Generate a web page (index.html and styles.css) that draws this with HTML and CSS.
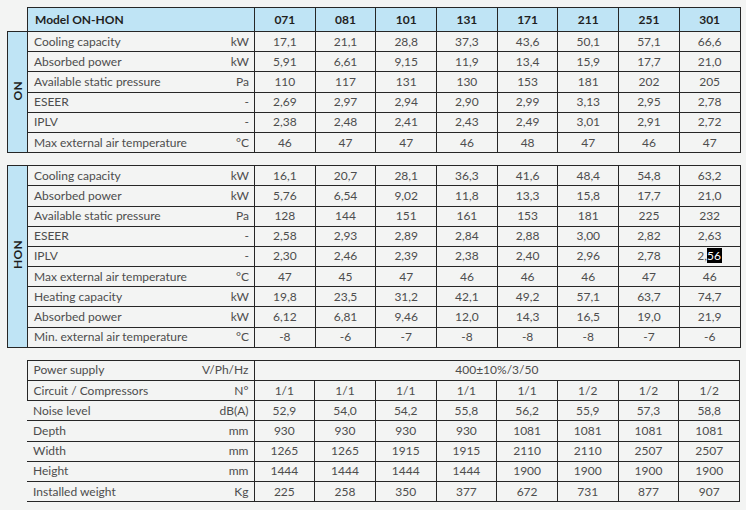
FILE: index.html
```html
<!DOCTYPE html>
<html lang="en">
<head>
<meta charset="utf-8">
<title>Model ON-HON</title>
<link rel="stylesheet" href="styles.css">
</head>
<body>
<div class="page">
  <table class="spec t1">
    <colgroup><col class="c-side"><col class="c-label"><col class="c-d"><col class="c-d"><col class="c-d"><col class="c-d"><col class="c-d"><col class="c-d"><col class="c-d"><col class="c-d"></colgroup>
    <thead>
      <tr><th class="blank"></th><th class="model">Model ON-HON</th><th>071</th><th>081</th><th>101</th><th>131</th><th>171</th><th>211</th><th>251</th><th>301</th></tr>
    </thead>
    <tbody>
      <tr><th class="side" rowspan="6"><span class="vt">ON</span></th><td class="lc"><div class="lab"><span>Cooling capacity</span><span>kW</span></div></td><td>17,1</td><td>21,1</td><td>28,8</td><td>37,3</td><td>43,6</td><td>50,1</td><td>57,1</td><td>66,6</td></tr>
      <tr><td class="lc"><div class="lab"><span>Absorbed power</span><span>kW</span></div></td><td>5,91</td><td>6,61</td><td>9,15</td><td>11,9</td><td>13,4</td><td>15,9</td><td>17,7</td><td>21,0</td></tr>
      <tr><td class="lc"><div class="lab"><span>Available static pressure</span><span>Pa</span></div></td><td>110</td><td>117</td><td>131</td><td>130</td><td>153</td><td>181</td><td>202</td><td>205</td></tr>
      <tr><td class="lc"><div class="lab"><span>ESEER</span><span>-</span></div></td><td>2,69</td><td>2,97</td><td>2,94</td><td>2,90</td><td>2,99</td><td>3,13</td><td>2,95</td><td>2,78</td></tr>
      <tr><td class="lc"><div class="lab"><span>IPLV</span><span>-</span></div></td><td>2,38</td><td>2,48</td><td>2,41</td><td>2,43</td><td>2,49</td><td>3,01</td><td>2,91</td><td>2,72</td></tr>
      <tr><td class="lc"><div class="lab"><span>Max external air temperature</span><span>°C</span></div></td><td>46</td><td>47</td><td>47</td><td>46</td><td>48</td><td>47</td><td>46</td><td>47</td></tr>
    </tbody>
  </table>

  <table class="spec t2">
    <colgroup><col class="c-side"><col class="c-label"><col class="c-d"><col class="c-d"><col class="c-d"><col class="c-d"><col class="c-d"><col class="c-d"><col class="c-d"><col class="c-d"></colgroup>
    <tbody>
      <tr><th class="side" rowspan="9"><span class="vt">HON</span></th><td class="lc"><div class="lab"><span>Cooling capacity</span><span>kW</span></div></td><td>16,1</td><td>20,7</td><td>28,1</td><td>36,3</td><td>41,6</td><td>48,4</td><td>54,8</td><td>63,2</td></tr>
      <tr><td class="lc"><div class="lab"><span>Absorbed power</span><span>kW</span></div></td><td>5,76</td><td>6,54</td><td>9,02</td><td>11,8</td><td>13,3</td><td>15,8</td><td>17,7</td><td>21,0</td></tr>
      <tr><td class="lc"><div class="lab"><span>Available static pressure</span><span>Pa</span></div></td><td>128</td><td>144</td><td>151</td><td>161</td><td>153</td><td>181</td><td>225</td><td>232</td></tr>
      <tr><td class="lc"><div class="lab"><span>ESEER</span><span>-</span></div></td><td>2,58</td><td>2,93</td><td>2,89</td><td>2,84</td><td>2,88</td><td>3,00</td><td>2,82</td><td>2,63</td></tr>
      <tr><td class="lc"><div class="lab"><span>IPLV</span><span>-</span></div></td><td>2,30</td><td>2,46</td><td>2,39</td><td>2,38</td><td>2,40</td><td>2,96</td><td>2,78</td><td>2,<span class="sel">56</span></td></tr>
      <tr><td class="lc"><div class="lab"><span>Max external air temperature</span><span>°C</span></div></td><td>47</td><td>45</td><td>47</td><td>46</td><td>46</td><td>46</td><td>47</td><td>46</td></tr>
      <tr><td class="lc"><div class="lab"><span>Heating capacity</span><span>kW</span></div></td><td>19,8</td><td>23,5</td><td>31,2</td><td>42,1</td><td>49,2</td><td>57,1</td><td>63,7</td><td>74,7</td></tr>
      <tr><td class="lc"><div class="lab"><span>Absorbed power</span><span>kW</span></div></td><td>6,12</td><td>6,81</td><td>9,46</td><td>12,0</td><td>14,3</td><td>16,5</td><td>19,0</td><td>21,9</td></tr>
      <tr><td class="lc"><div class="lab"><span>Min. external air temperature</span><span>°C</span></div></td><td>-8</td><td>-6</td><td>-7</td><td>-8</td><td>-8</td><td>-8</td><td>-7</td><td>-6</td></tr>
    </tbody>
  </table>

  <table class="spec t3">
    <colgroup><col class="c-side"><col class="c-label"><col class="c-d"><col class="c-d"><col class="c-d"><col class="c-d"><col class="c-d"><col class="c-d"><col class="c-d"><col class="c-d"></colgroup>
    <tbody>
      <tr><td class="blank"></td><td class="lc boxed"><div class="lab"><span>Power supply</span><span>V/Ph/Hz</span></div></td><td colspan="8">400±10%/3/50</td></tr>
      <tr><td class="blank"></td><td class="lc boxed"><div class="lab"><span>Circuit / Compressors</span><span>N°</span></div></td><td>1/1</td><td>1/1</td><td>1/1</td><td>1/1</td><td>1/1</td><td>1/2</td><td>1/2</td><td>1/2</td></tr>
      <tr><td class="blank"></td><td class="lc open"><div class="lab"><span>Noise level</span><span>dB(A)</span></div></td><td>52,9</td><td>54,0</td><td>54,2</td><td>55,8</td><td>56,2</td><td>55,9</td><td>57,3</td><td>58,8</td></tr>
      <tr><td class="blank"></td><td class="lc open"><div class="lab"><span>Depth</span><span>mm</span></div></td><td>930</td><td>930</td><td>930</td><td>930</td><td>1081</td><td>1081</td><td>1081</td><td>1081</td></tr>
      <tr><td class="blank"></td><td class="lc open"><div class="lab"><span>Width</span><span>mm</span></div></td><td>1265</td><td>1265</td><td>1915</td><td>1915</td><td>2110</td><td>2110</td><td>2507</td><td>2507</td></tr>
      <tr><td class="blank"></td><td class="lc open"><div class="lab"><span>Height</span><span>mm</span></div></td><td>1444</td><td>1444</td><td>1444</td><td>1444</td><td>1900</td><td>1900</td><td>1900</td><td>1900</td></tr>
      <tr><td class="blank"></td><td class="lc open"><div class="lab"><span>Installed weight</span><span>Kg</span></div></td><td>225</td><td>258</td><td>350</td><td>377</td><td>672</td><td>731</td><td>877</td><td>907</td></tr>
    </tbody>
  </table>
</div>
</body>
</html>
```

FILE: styles.css
```css
html, body {
  margin: 0;
  padding: 0;
}

body {
  background: #f3f4f3;
  font-family: Lato, "Open Sans", "DejaVu Sans", sans-serif;
  font-size: 12px;
  color: #4d4d4d;
}

.page {
  padding: 7px 6px 0 7px;
  display: flex;
  flex-direction: column;
  gap: 12px;
}

.spec {
  border-collapse: collapse;
  table-layout: fixed;
  width: 733px;
}

.c-side { width: 20px; }
.c-label { width: 227px; }
.c-d { width: 60.7px; }

.spec td,
.spec th {
  border: 1px solid #262626;
  padding: 0;
  height: 19.2px;
  text-align: center;
  font-weight: 400;
  line-height: 14px;
}

.spec thead th {
  background: #bfe4f5;
  height: 23px;
  font-weight: 700;
  color: #1f1f1f;
}

.spec thead th.model {
  text-align: left;
  padding-left: 7px;
}

.spec th.blank,
.spec td.blank,
.spec thead th.blank {
  border: none;
  background: transparent;
}

.spec th.side {
  background: #bfe4f5;
  font-weight: 700;
  color: #1f1f1f;
}

.vt {
  display: inline-block;
  writing-mode: vertical-rl;
  transform: rotate(180deg);
  letter-spacing: 0.3px;
}

.lab {
  display: flex;
  justify-content: space-between;
  padding: 0 5px 0 6px;
}

.t3 td.open {
  border-left: none;
}

.sel {
  background: #000;
  color: #fff;
  padding: 0 1px 0 0;
}
```
